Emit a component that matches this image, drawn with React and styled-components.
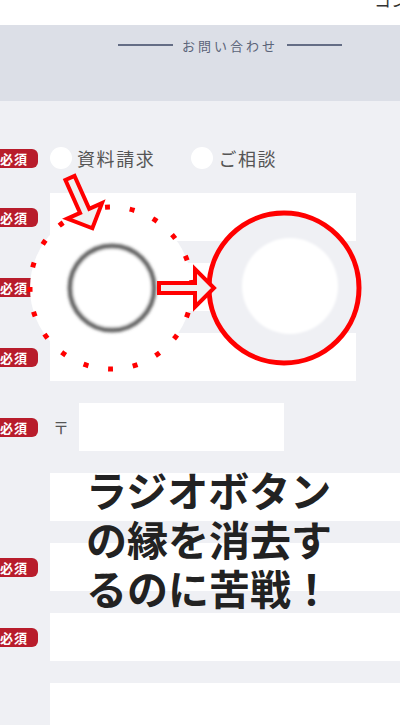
import styled, { createGlobalStyle } from "styled-components";

const GlobalStyle = createGlobalStyle`
  html, body {
    margin: 0;
    padding: 0;
    background: #eff0f4;
  }
  body {
    font-family: "Noto Sans CJK JP", "Noto Sans", sans-serif;
  }
`;

const Page = styled.div`
  position: relative;
  width: 400px;
  height: 725px;
  overflow: hidden;
  background: #eff0f4;
`;

const TopBar = styled.div`
  height: 25px;
  background: #fff;
  padding-left: 374px;
  overflow: hidden;
  white-space: nowrap;
  font-size: 17px;
  line-height: 17px;
  color: #333;

  span {
    display: block;
    margin-top: -9px;
  }
`;

const HeadingBand = styled.div`
  height: 76px;
  background: #dcdfe7;
  display: flex;
  justify-content: center;
  padding-top: 11px;
  box-sizing: border-box;
  padding-left: 60px;
`;

const Heading = styled.h2`
  margin: 0;
  height: 18px;
  display: flex;
  align-items: center;
  gap: 9px;
  font-size: 13px;
  font-weight: 400;
  letter-spacing: 3px;
  color: #5b6479;

  &::before,
  &::after {
    content: "";
    width: 55px;
    height: 2px;
    background: #646d85;
  }
`;

const Form = styled.form`
  display: grid;
  grid-template-columns: 38px 1fr;
  column-gap: 12px;
  row-gap: 22px;
  align-items: center;
  padding-top: 44px;
`;

const Badge = styled.span`
  display: flex;
  align-items: center;
  justify-content: center;
  margin-left: -10px;
  width: 48px;
  height: 19px;
  border-radius: 6px;
  background: #b81c2b;
  color: #fff;
  font-size: 13px;
  font-weight: 700;
  letter-spacing: 1px;
`;

const Spacer = styled.span``;

const RadioRow = styled.div`
  height: 26px;
  display: flex;
  align-items: center;
  gap: 36px;
`;

const RadioLabel = styled.label`
  display: flex;
  align-items: center;
  gap: 5px;
  font-size: 18px;
  letter-spacing: 1.6px;
  color: #555;
`;

const RadioDot = styled.span`
  width: 22px;
  height: 22px;
  border-radius: 50%;
  background: #fff;
`;

const Field = styled.div`
  display: flex;
  align-items: center;
  gap: 10px;
`;

const Input = styled.div`
  width: ${(p) => p.$w}px;
  height: 48px;
  background: #fff;
  flex-shrink: 0;
`;

const Postal = styled.span`
  margin-left: 3px;
  font-size: 16px;
  color: #555;
`;

const Overlay = styled.svg`
  position: absolute;
  left: 0;
  top: 0;
  pointer-events: none;
`;

const Caption = styled.div`
  position: absolute;
  left: 86px;
  top: 465px;
  font-size: 41px;
  line-height: 49px;
  font-weight: 700;
  color: #222;
  white-space: pre;
`;

const ARROW = "M0,-5 L36,-5 L36,-19 L55,0 L36,19 L36,5 L0,5 Z";

const Arrow = ({ transform }) => (
  <path
    d={ARROW}
    transform={transform}
    fill="#f0f0f0"
    stroke="#ff0000"
    strokeWidth="4"
    strokeLinejoin="miter"
  />
);

const Annotation = () => (
  <Overlay width="400" height="725" viewBox="0 0 400 725">
    <defs>
      <filter id="soft" x="-20%" y="-20%" width="140%" height="140%">
        <feGaussianBlur stdDeviation="1.6" />
      </filter>
      <filter id="softer" x="-20%" y="-20%" width="140%" height="140%">
        <feGaussianBlur stdDeviation="1" />
      </filter>
    </defs>
    <circle
      cx="111"
      cy="288"
      r="81"
      fill="#fff"
      stroke="#ff0000"
      strokeWidth="5"
      strokeDasharray="5 20"
    />
    <circle
      cx="112"
      cy="288"
      r="42"
      fill="#fff"
      stroke="#666"
      strokeWidth="5"
      filter="url(#soft)"
    />
    <circle cx="284" cy="288" r="75" fill="#eff0f4" stroke="#ff0000" strokeWidth="5" />
    <circle cx="290" cy="286" r="48" fill="#fff" filter="url(#softer)" />
    <Arrow transform="translate(159 288)" />
    <Arrow transform="translate(70 178) rotate(66)" />
  </Overlay>
);

export default function App() {
  return (
    <>
      <GlobalStyle />
      <Page>
        <TopBar>
          <span>コンタクト</span>
        </TopBar>
        <HeadingBand>
          <Heading>お問い合わせ</Heading>
        </HeadingBand>
        <Form>
          <Badge>必須</Badge>
          <RadioRow>
            <RadioLabel>
              <RadioDot />
              資料請求
            </RadioLabel>
            <RadioLabel>
              <RadioDot />
              ご相談
            </RadioLabel>
          </RadioRow>

          <Badge>必須</Badge>
          <Input $w={306} />
          <Badge>必須</Badge>
          <Input $w={306} />
          <Badge>必須</Badge>
          <Input $w={306} />

          <Badge>必須</Badge>
          <Field>
            <Postal>〒</Postal>
            <Input $w={205} />
          </Field>

          <Spacer />
          <Input $w={360} />
          <Badge>必須</Badge>
          <Input $w={360} />
          <Badge>必須</Badge>
          <Input $w={360} />
          <Spacer />
          <Input $w={360} />
        </Form>
        <Annotation />
        <Caption>{"ラジオボタン\nの縁を消去す\nるのに苦戦！"}</Caption>
      </Page>
    </>
  );
}
